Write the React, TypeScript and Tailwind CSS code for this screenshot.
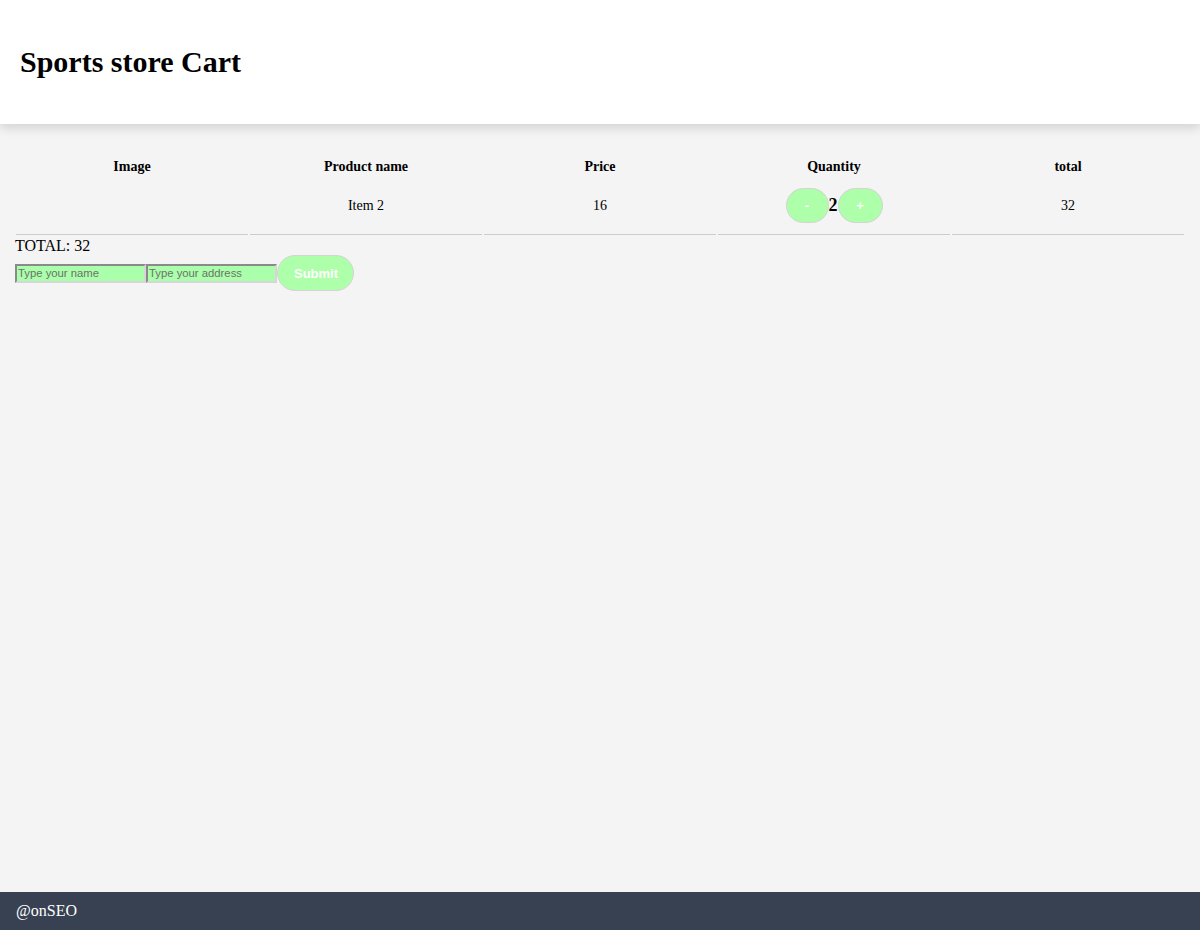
const serif = "font-['Liberation_Serif','Times_New_Roman',serif]"
const sans = "font-['Liberation_Sans',Arial,sans-serif]"

type CartLine = {
  name: string
  price: number
  qty: number
}

const lines: CartLine[] = [{name: 'Item 2', price: 16, qty: 2}]

function PillButton({children, className = ''}: {children: React.ReactNode; className?: string}) {
  return (
    <button
      className={`${sans} rounded-[20px] border border-[#d4d4d4] bg-[#adffa9] text-[13px] font-bold leading-[15px] text-white ${className}`}
    >
      {children}
    </button>
  )
}

export default function App() {
  const total = lines.reduce((sum, l) => sum + l.price * l.qty, 0)

  return (
    <div className={`${serif} flex min-h-[930px] flex-col bg-[#f4f4f4] text-black`}>
      <header className="relative z-10 flex h-[124px] items-center bg-white px-5 shadow-[0_4px_10px_rgba(0,0,0,0.14)]">
        <h1 className="text-[30px] font-bold leading-[34px]">Sports store Cart</h1>
      </header>

      <main className="flex-1 px-[14px] pt-[32px]">
        <table className="w-full border-separate border-spacing-[2px] text-[14px]">
          <thead>
            <tr>
              {['Image', 'Product name', 'Price', 'Quantity', 'total'].map((h) => (
                <th key={h} className="w-[232px] py-[1px] text-center font-bold leading-[16px]">
                  {h}
                </th>
              ))}
            </tr>
          </thead>
          <tbody>
            {lines.map((l) => (
              <tr key={l.name}>
                <td className="border-b border-[#cccccc] pt-[10px] pb-[11px]"></td>
                <td className="border-b border-[#cccccc] pt-[10px] pb-[11px] text-center">{l.name}</td>
                <td className="border-b border-[#cccccc] pt-[10px] pb-[11px] text-center">{l.price}</td>
                <td className="border-b border-[#cccccc] pt-[10px] pb-[11px] text-center">
                  <div className="flex items-center justify-center">
                    <PillButton className="h-[35px] w-[43px]">-</PillButton>
                    <span className="text-[18px] font-bold">{l.qty}</span>
                    <PillButton className="h-[35px] w-[45px]">+</PillButton>
                  </div>
                </td>
                <td className="border-b border-[#cccccc] pt-[10px] pb-[11px] text-center">{l.price * l.qty}</td>
              </tr>
            ))}
          </tbody>
        </table>

        <p className="pl-px text-[16px] leading-[18px]">TOTAL: {total}</p>

        <form className="flex items-center pl-px" onSubmit={(e) => e.preventDefault()}>
          <input
            placeholder="Type your name"
            className={`${sans} h-[19px] w-[131px] border-2 border-t-[#8a8a8a] border-l-[#8a8a8a] border-r-[#d6d6d6] border-b-[#d6d6d6] bg-[#aaffaa] px-[1px] text-[11.3px] placeholder:text-[#6f6f6f]`}
          />
          <input
            placeholder="Type your address"
            className={`${sans} h-[19px] w-[131px] border-2 border-t-[#8a8a8a] border-l-[#8a8a8a] border-r-[#d6d6d6] border-b-[#d6d6d6] bg-[#aaffaa] px-[1px] text-[11.3px] placeholder:text-[#6f6f6f]`}
          />
          <PillButton className="h-[36px] w-[77px] px-4">Submit</PillButton>
        </form>
      </main>

      <footer className="flex h-[38px] items-center bg-[#374151] px-4 text-[16px] text-white">
        @onSEO
      </footer>
    </div>
  )
}
